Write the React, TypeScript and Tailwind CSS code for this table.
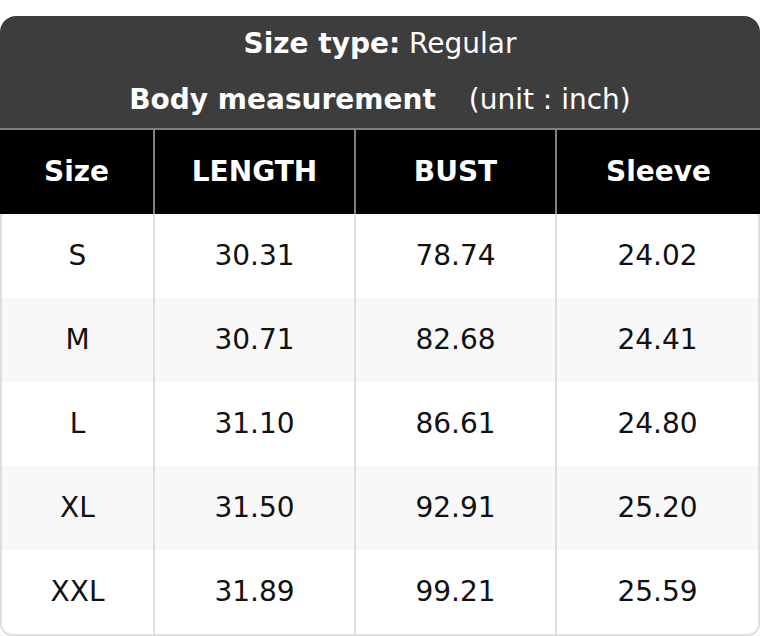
const rows = [
  ["S", "30.31", "78.74", "24.02"],
  ["M", "30.71", "82.68", "24.41"],
  ["L", "31.10", "86.61", "24.80"],
  ["XL", "31.50", "92.91", "25.20"],
  ["XXL", "31.89", "99.21", "25.59"],
];

export default function App() {
  return (
    <div className="w-[760px] h-[636px] bg-white pt-4 font-['DejaVu_Sans',sans-serif] text-[28px]">
      <div className="rounded-t-[16px] overflow-hidden">
        {/* title block */}
        <div className="bg-[#3d3d3d] text-white h-[114px] flex flex-col border-b-2 border-[#808080]">
          <div className="h-[56px] flex items-center justify-center">
            <span className="font-bold">Size type:</span>
            <span>&nbsp;Regular</span>
          </div>
          <div className="h-[56px] flex items-center justify-center">
            <span className="font-bold">Body measurement</span>
            <span className="ml-[33px]">(unit : inch)</span>
          </div>
        </div>

        {/* column heads */}
        <div className="grid grid-cols-[155px_201px_201px_1fr] h-[84px] bg-black text-white font-bold divide-x-2 divide-[#808080]">
          {["Size", "LENGTH", "BUST", "Sleeve"].map((h) => (
            <div key={h} className="flex items-center justify-center">
              {h}
            </div>
          ))}
        </div>
      </div>

      <div className="border-x-2 border-b-2 border-[#dedede] rounded-b-[12px] overflow-hidden text-[#111]">
        {rows.map((r, i) => (
          <div
            key={r[0]}
            className={`grid grid-cols-[153px_201px_201px_1fr] h-[84px] divide-x-2 divide-[#dedede] ${
              i % 2 === 1 ? "bg-[#f8f8f8]" : "bg-white"
            }`}
          >
            {r.map((c, j) => (
              <div key={j} className="flex items-center justify-center">
                {c}
              </div>
            ))}
          </div>
        ))}
      </div>
    </div>
  );
}
